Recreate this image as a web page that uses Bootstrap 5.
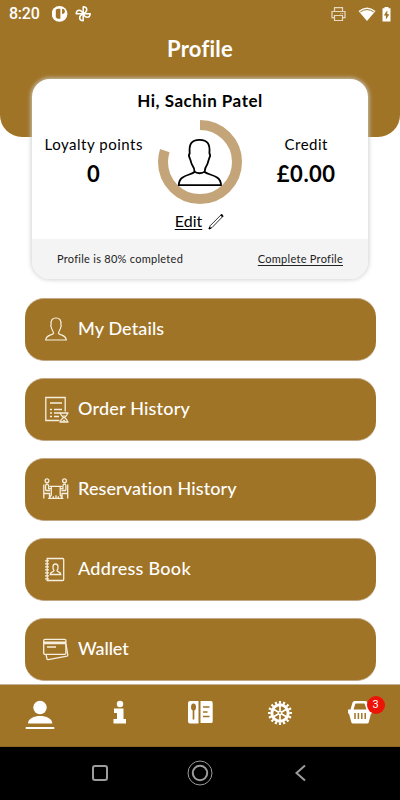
<!DOCTYPE html>
<html lang="en">
<head>
<meta charset="utf-8">
<meta name="viewport" content="width=device-width, initial-scale=1">
<title>Profile</title>
<link href="https://cdn.jsdelivr.net/npm/bootstrap@5.3.0/dist/css/bootstrap.min.css" rel="stylesheet">
<style>
:root{--gold:#a07427;--tan:#c4a57a}
body{font-family:Lato,"Open Sans",sans-serif;font-variant-ligatures:none;color:#000;background:#fff}
svg{display:block;flex:none}
.phone{width:400px;height:800px}
.hero{height:137px;background:var(--gold);border-radius:0 0 22px 22px}
.statusbar{height:27px;padding:0 8px 0 9px}
.clock{font:500 16px/27px Roboto,sans-serif;letter-spacing:-.25px}
.title{font-size:22px;line-height:28px;font-weight:700;margin-top:8px;letter-spacing:.2px}
.profile{width:336px;height:200px;margin-top:-58px;border-radius:18px;box-shadow:0 0 4px 1px rgba(205,205,205,.9)}
.hello{font-size:17px;line-height:22px;font-weight:700;padding-top:11px;height:41px;letter-spacing:.5px}
.stat{width:124px;padding-top:13px}
.stat-name{font-size:15px;line-height:22px;letter-spacing:.52px}
.stat-value{font-size:22px;line-height:28px;font-weight:700;padding-top:5px;letter-spacing:.5px}
.edit{height:35px;font-size:16px;line-height:20px;padding-bottom:1px}
.edit svg{margin-left:6px}
.ul{text-decoration:underline;text-decoration-thickness:1px;text-underline-offset:2px;color:inherit}
.strip{height:40px;background:#f4f4f4;border-radius:0 0 18px 18px;padding:0 25px;font-size:11px;color:#222;letter-spacing:.27px}
.menu{padding:19px 24.5px 0 24.5px;gap:17px;height:405px}
.item{height:63px;flex:none;border-radius:19px;background:var(--gold);border:1px solid #c2a888;border-width:1px 0;padding:0 0 2px 17.5px;color:#fff;font-size:18px;font-weight:500;letter-spacing:.12px;text-decoration:none}
.item:hover{color:#fff}
.item svg{margin-right:8px}
.tabs{height:63px;background:var(--gold);border-top:1px solid #c4b49c;border-bottom:1px solid #8f6720}
.tabs a{width:80px;color:#fff;padding-top:14px}
.count{left:46.500px;top:10.500px;width:18px;height:18px;background:#ee1307;font:400 11px/18px Roboto,sans-serif}
.sysbar{height:53px;background:#000;padding-bottom:1px}
.sysbar div{width:100px}
</style>
</head>
<body>
<main class="phone d-flex flex-column overflow-hidden">
<header class="hero text-white flex-shrink-0">
  <div class="statusbar d-flex align-items-center">
    <span class="clock">8:20</span>
    <svg class="ms-auto order-2" width="62" height="18" viewBox="0 0 62 18" fill="none" stroke="#fff">
      <g stroke="#e6d9c2" stroke-width="1.2"><path d="M4.500 6V2.600h8V6M4.500 12.700H2V6.500h13v6.200h-2.500M4.500 10.500h8v5h-8z"/><path d="M10.500 8.600h.8M12.300 8.600h.8"/></g>
      <path d="M28.500 6Q37-1 45.500 6L37 16z" fill="#fff" stroke="none"/><path d="M30.300 6.900Q37 2.200 43.700 6.900" stroke="#a07427" stroke-width="1"/>
      <path d="M52.500 3.300h2V2h4v1.300h2v13.200h-8z" fill="#fff" stroke="none"/><path d="M57.300 5.200 53.800 10.600h2.100v4l3.500-5.400h-2.100z" fill="#a07427" stroke="none"/>
    </svg>
    <svg style="margin-left:12px" width="42" height="18" viewBox="0 0 42 18">
      <circle cx="7.500" cy="8.800" r="7.900" fill="#fff"/><path d="M3.800 4.800Q5 3.800 6.300 3.800H8.400v9.900H5.600a6 6 0 0 1-1.800-1.400zM10.100 3.800c3.800 0 3.800 5.300 0 5.300z" fill="#a07427"/>
      <g fill="none" stroke="#fff" stroke-width="1.500" stroke-linejoin="round"><path d="M31.200 8.700V1.700c4.500.3 5 4.800 0 7z"/><path d="M31.200 8.700V1.700c4.500.3 5 4.800 0 7z" transform="rotate(90 31.200 8.700)"/><path d="M31.200 8.700V1.700c4.500.3 5 4.800 0 7z" transform="rotate(180 31.200 8.700)"/><path d="M31.200 8.700V1.700c4.500.3 5 4.800 0 7z" transform="rotate(270 31.200 8.700)"/></g>
    </svg>
  </div>
  <h1 class="title text-center mb-0">Profile</h1>
</header>

<section class="profile bg-white mx-auto flex-shrink-0 d-flex flex-column">
  <div class="hello text-center">Hi, Sachin Patel</div>
  <div class="d-flex" style="height:84px">
    <div class="stat text-center"><div class="stat-name">Loyalty points</div><div class="stat-value">0</div></div>
    <svg style="margin-left:2px" width="84" height="84" viewBox="0 0 84 84" fill="none">
      <circle cx="42" cy="42" r="37" stroke="#c4a57a" stroke-width="10" pathLength="100" stroke-dasharray="80 20" transform="rotate(-90 42 42)"/>
      <path d="M36.500 51.500C36.500 48 35.400 46.600 33.800 44.200C32.800 42 32.900 40.600 31.800 38.300C30.700 36.300 30.900 34.200 31.700 33.300C30.900 24.500 33 19.800 41.500 19.800S52.200 24.500 51.400 33.300C52.200 34.200 52.300 36.300 51.200 38.300C50.200 40.600 50.300 42 49.300 44.200C47.700 46.600 46.700 48 46.700 51.500C44.500 53.800 38.700 53.800 36.500 51.500ZM36.500 52C33 55.500 20.800 54.500 20.800 65.200H63C63 54.500 50.200 55.500 46.700 52" stroke="#000" stroke-width="1.800" stroke-linejoin="round"/>
    </svg>
    <div class="stat text-center" style="margin-left:3px"><div class="stat-name">Credit</div><div class="stat-value">£0.00</div></div>
  </div>
  <div class="edit d-flex align-items-center justify-content-center"><a class="ul" href="#">Edit</a>
    <svg width="17" height="17" viewBox="0 0 17 17" fill="none" stroke="#000"><path d="M1.200 15.800 2.100 12.800 13 1.900Q15.200 1 14.800 3.400L4.200 14.400z" stroke-width=".8"/><path d="M1 16l1.800-.6-1.300-1.300z" fill="#000"/><path d="M12.800 1.600 14.900 3.700" stroke-width="1.600"/></svg>
  </div>
  <div class="strip d-flex align-items-center justify-content-between"><span>Profile is 80% completed</span><a class="ul" href="#">Complete Profile</a></div>
</section>

<nav class="menu d-flex flex-column overflow-hidden flex-shrink-0">
  <a class="item d-flex align-items-center" href="#"><svg width="28" height="28" viewBox="0 0 28 28" fill="none" stroke="#f6efdf" stroke-width="1.200"><path d="M11.500 18.300C11.200 15.500 9.500 15 9.300 12.200C8.600 11.500 8.700 10.300 9.100 9.800C8.600 5.200 10.400 3 14 3S19.400 5.200 18.900 9.800C19.300 10.300 19.400 11.500 18.700 12.200C18.500 15 16.800 15.500 16.500 18.300C18 20.400 24 19.800 24.300 25H3.700C4 19.800 10 20.400 11.500 18.300z"/></svg><span>My Details</span></a>
  <a class="item d-flex align-items-center" href="#"><svg width="28" height="28" viewBox="0 0 28 28" fill="none" stroke="#f6efdf" stroke-width="1.300"><path d="M17.500 25.500H3.800V2.500h19.400v14M8 8h12M8 14.500h2M12 14.500h8M8 18h2M12 18h6M8 21.500h2M12 21.500h5"/><path d="M17.500 18h9M17.500 27h9M18.500 18c0 3 2 3.500 3 4.500-1 1-3 1.500-3 4.500M25.500 18c0 3-2 3.500-3 4.500 1 1 3 1.500 3 4.500"/><path d="M20 26.500l2-2 2 2zM20.500 20.500h3L22 22z" fill="#f6efdf" stroke="none"/></svg><span style="letter-spacing:.2px">Order History</span></a>
  <a class="item d-flex align-items-center" href="#"><svg width="28" height="28" viewBox="0 0 28 28" fill="none" stroke="#f6efdf" stroke-width="1.300"><circle cx="5" cy="5.800" r="1.900"/><circle cx="22.500" cy="5.800" r="1.900"/><path d="M1.800 9.500v14M1.800 18.500h5.700v5.200M3.600 15.500V11Q3.600 9 5 9t1.600 2v2.700h3.200M3.600 15.500h4.500M25.700 9.500v14M25.700 18.500H20v5.200M23.900 15.500V11Q23.900 9 22.500 9t-1.600 2v2.700h-3.200M23.900 15.500h-4.500M7.500 11.300h12.500M9.300 11.500v8.600L7 23.400h13.500l-2.300-3.300v-8.600M11.300 23.300v-2M14 23.300v-3M16.300 23.300v-2"/></svg><span>Reservation History</span></a>
  <a class="item d-flex align-items-center" href="#"><svg width="28" height="28" viewBox="0 0 28 28" fill="none" stroke="#f6efdf" stroke-width="1.300"><path d="M5.200 3.500h15.500q1 0 1 1v20q0 1-1 1H5.200z"/><path d="M3 5.800h4M3 8.800h4M3 11.800h4M3 14.800h4M3 17.800h4M3 20.800h4M3 23.800h4" stroke-width="1.300"/><path d="M12 15.600C10.500 13 10.300 9 13.500 9S16.500 13 15 15.600C15.500 17.300 18.700 16.700 18.800 19.500H8.200C8.300 16.700 11.500 17.300 12 15.600z"/></svg><span style="letter-spacing:.28px">Address Book</span></a>
  <a class="item d-flex align-items-center" href="#"><svg width="28" height="28" viewBox="0 0 28 28" fill="none" stroke="#f6efdf" stroke-width="1.300"><rect x="1.700" y="4.300" width="22.200" height="15" rx="1.300"/><path d="M1.700 7.200h22.200M1.700 8.500h22.200M5 12h9"/><path d="M24 9l1.800 11.200q.1.800-.7 1L6.200 24.600q-1 .2-1.200-.8L4 19.500"/></svg><span style="letter-spacing:-.1px">Wallet</span></a>
</nav>

<nav class="tabs d-flex flex-shrink-0">
  <a href="#"><svg class="mx-auto" width="30" height="32" viewBox="0 0 30 32" fill="#fff"><circle cx="15" cy="8.500" r="6.700"/><path d="M3 24.500C3 14.500 27.300 14.500 27.300 24.500z"/><rect x=".5" y="28" width="29" height="2" rx="1"/></svg></a>
  <a href="#"><svg class="mx-auto" width="30" height="32" viewBox="0 0 30 32" fill="#fff"><circle cx="15" cy="5" r="3.200"/><path d="M9 9.500h9.500V20H21v4.500H8.500V20H12v-6H9z"/></svg></a>
  <a href="#"><svg class="mx-auto" width="30" height="32" viewBox="0 0 30 32" fill="#fff"><path d="M5 2h8.500v22.500H5q-2 0-2-2V4q0-2 2-2zM15.500 2H26q1.700 0 1.700 2v18.500q0 1.500-1.700 1.500H15.500z"/><ellipse cx="8.500" cy="8" rx="2.500" ry="3.600" fill="#a07427"/><path d="M8.500 10v10.500M18 8h6.500M18 13h4.500M18 17.500h6.500" stroke="#a07427" stroke-width="1.700"/></svg></a>
  <a href="#"><svg class="mx-auto" width="30" height="32" viewBox="0 0 30 32" fill="none" stroke="#fff"><circle cx="15" cy="14" r="10.700" stroke-width="2.600" pathLength="64" stroke-dasharray="2 2" stroke-dashoffset="1"/><circle cx="15" cy="14" r="8.200" stroke-width="3"/><path d="M15 6v16M8.100 10l13.800 8M8.100 18l13.800-8" stroke-width="1.700"/><circle cx="15" cy="14" r="2.300" fill="#fff" stroke="none"/><circle cx="15" cy="14" r=".9" fill="#a07427" stroke="none"/></svg></a>
  <a class="position-relative text-decoration-none" href="#"><svg class="mx-auto" width="30" height="32" viewBox="0 0 30 32"><path d="M3 10.500h2.500L7.500 3.600Q8 2 9.600 2h10.800q1.600 0 2.100 1.600l2 6.900H27v4h-1l-2.200 8.800q-.4 1.300-1.700 1.300H8q-1.300 0-1.700-1.300L4 14.500H3z" fill="#fff"/><path d="M8.500 10.500 10.200 5.200Q10.400 4.500 11 4.500h8q.6 0 .8.700l1.700 5.300z" fill="#a07427"/><path d="M10 14v6M13.400 14v6M16.800 14v6M20.200 14v6" stroke="#a07427" stroke-width="1.500"/></svg><span class="count position-absolute rounded-circle text-center">3</span></a>
</nav>
<footer class="sysbar d-flex justify-content-center align-items-center flex-shrink-0">
  <div><svg class="mx-auto" width="26" height="26" viewBox="0 0 26 26" fill="none" stroke="#9c9c9c" stroke-width="2"><rect x="6" y="6" width="14" height="14" rx="2"/></svg></div>
  <div><svg class="mx-auto" width="26" height="26" viewBox="0 0 26 26" fill="none" stroke="#9c9c9c"><circle cx="13" cy="13" r="12"/><circle cx="13" cy="13" r="7.200" stroke-width="2"/></svg></div>
  <div><svg class="mx-auto" width="26" height="26" viewBox="0 0 26 26" fill="none" stroke="#9c9c9c" stroke-width="2"><path d="M18 5.500 9.500 13l8.500 7.500"/></svg></div>
</footer>
</main>
<script src="https://cdn.jsdelivr.net/npm/bootstrap@5.3.0/dist/js/bootstrap.bundle.min.js"></script>
</body>
</html>
